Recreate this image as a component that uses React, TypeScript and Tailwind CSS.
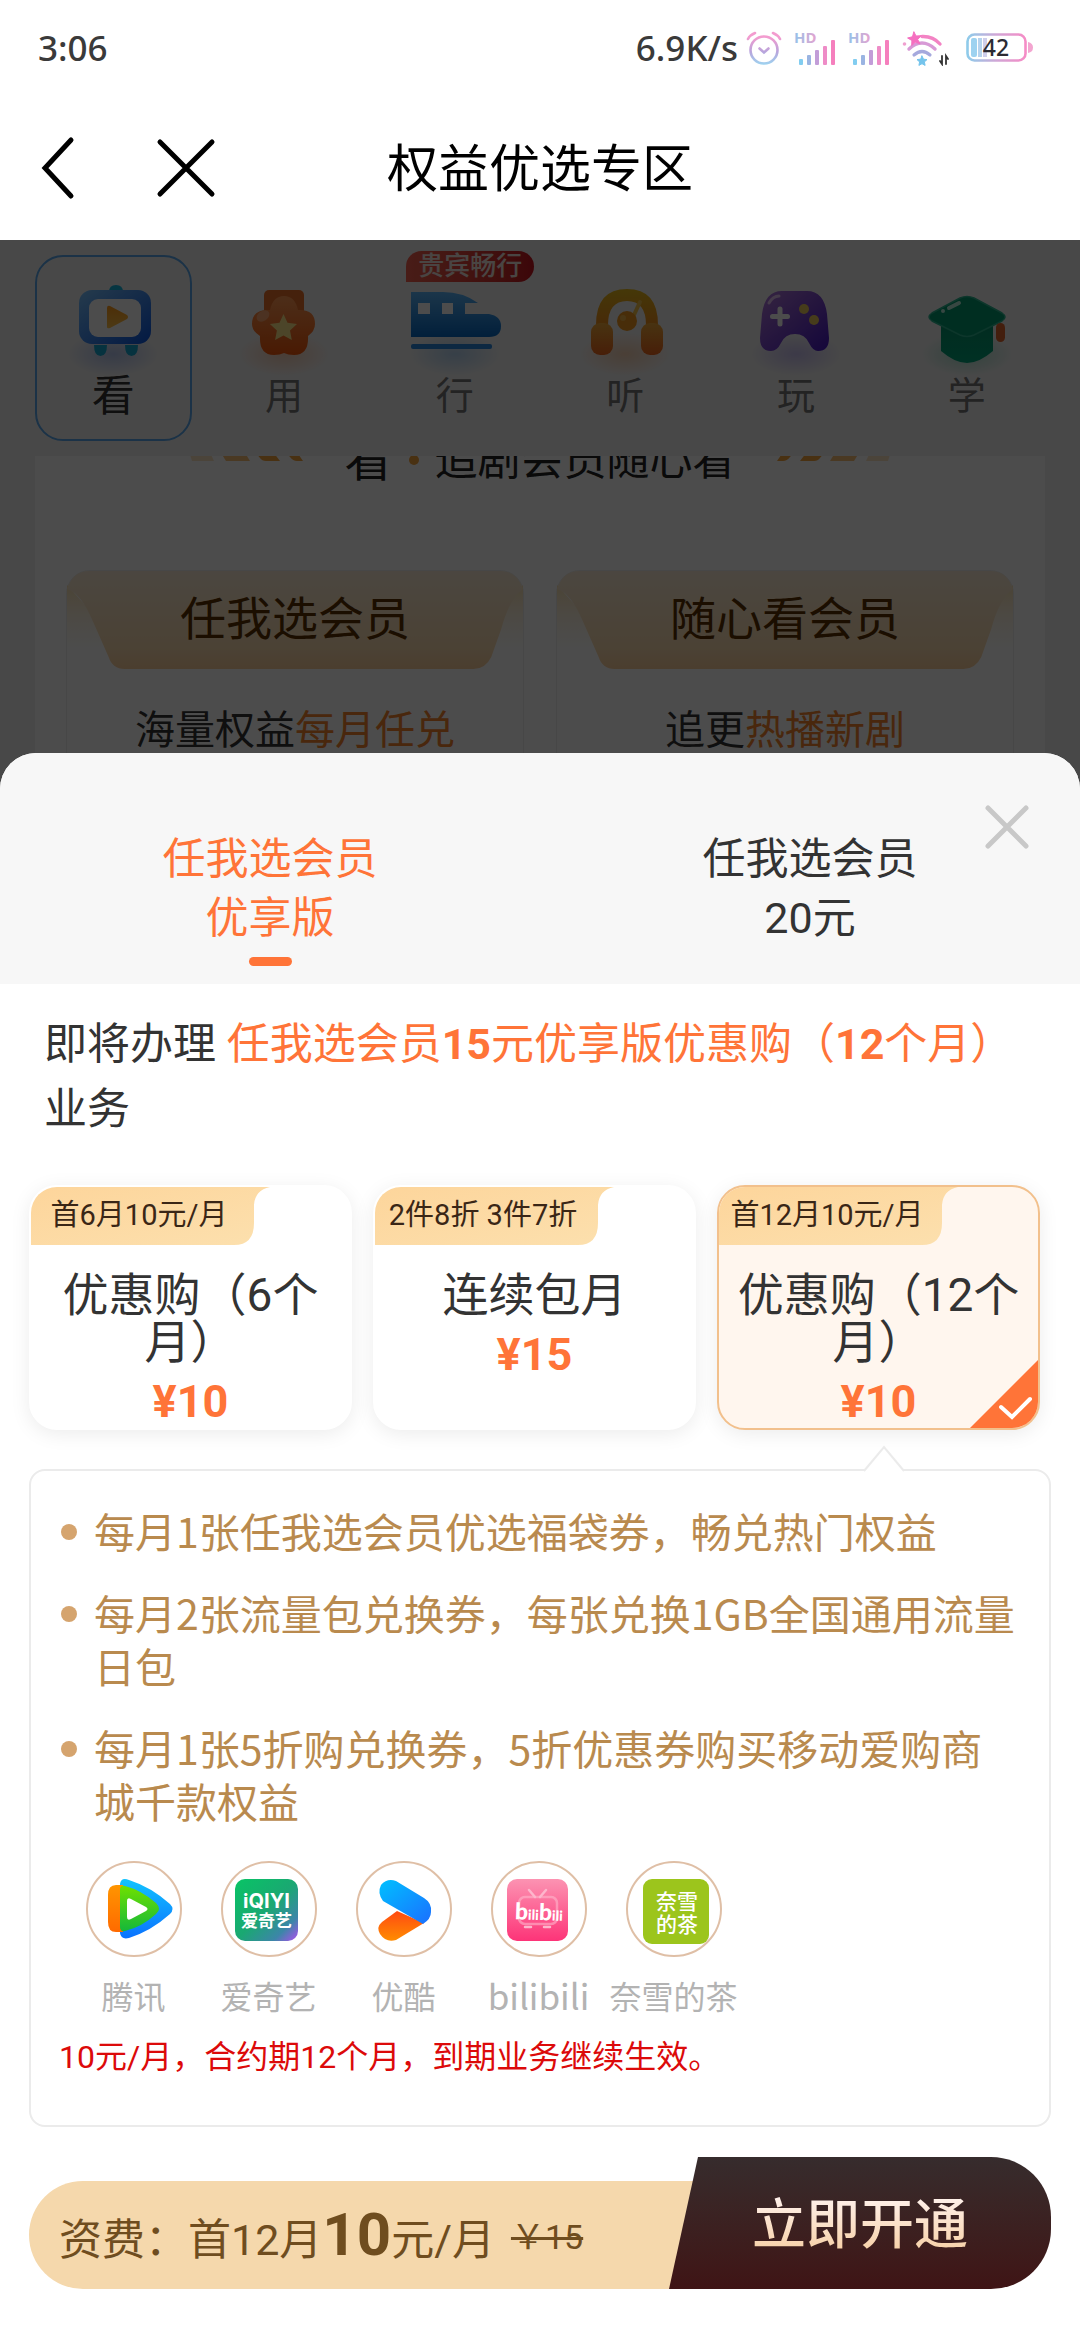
import { useState, type ReactNode } from 'react';
import clsx from 'clsx';

function AlarmIcon() {
  return (
    <svg viewBox="0 0 36 36" className="size-9" fill="none" strokeLinecap="round" strokeWidth="2.6">
      <defs>
        <linearGradient id="alarm" x1="0" y1="0" x2="0" y2="36" gradientUnits="userSpaceOnUse">
          <stop offset="0.2" stopColor="#f39ccf" />
          <stop offset="0.6" stopColor="#b9a4dc" />
          <stop offset="1" stopColor="#9bd8f2" />
        </linearGradient>
      </defs>
      <g stroke="url(#alarm)">
        <circle cx="18" cy="20" r="13.5" />
        <path d="M13.5 18.5 18 22.5 22.5 18.5M2 9Q4 5 9 3M34 9Q32 5 27 3" />
      </g>
    </svg>
  );
}

function SignalIcon() {
  return (
    <svg viewBox="0 0 42 36" className="h-9 w-[42px] overflow-visible">
      <defs>
        <linearGradient id="hd" x1="0" y1="0" x2="1" y2="0">
          <stop offset="0" stopColor="#92c3ea" />
          <stop offset="1" stopColor="#e5a3cf" />
        </linearGradient>
      </defs>
      <text x="0" y="13" fontSize="15" fontWeight="700" fontFamily="Noto Sans" fill="url(#hd)">
        HD
      </text>
      <rect x="5" y="29" width="4" height="6" rx="1" fill="#82cdf0" />
      <rect x="13" y="25" width="4" height="10" rx="1" fill="#9ab4e2" />
      <rect x="21" y="20" width="4" height="15" rx="1" fill="#c29dd8" />
      <rect x="29" y="16" width="4" height="19" rx="1" fill="#ee8cc7" />
      <rect x="37" y="10" width="4" height="25" rx="1" fill="#f57fbd" />
    </svg>
  );
}

function WifiIcon() {
  return (
    <svg viewBox="0 0 48 36" className="h-9 w-12" fill="none" strokeLinecap="round">
      <path d="M20 6.5Q31 6 38 14" stroke="#f383c4" strokeWidth="3.4" />
      <path d="M7 19Q20 7 33 19" stroke="#d79ad6" strokeWidth="3.4" />
      <path d="M12 25Q20 18 28 25" stroke="#a5a9dd" strokeWidth="3.2" />
      <path
        d="m20 26 1.5 3.2 3.5.4-2.6 2.3.7 3.5-3.1-1.7-3.1 1.7.7-3.5L15 29.6l3.5-.4z"
        fill="#74c4ec"
        stroke="#74c4ec"
      />
      <path d="m12 2 2 4 5-.3-3.3 3.8 2.3 4.3-4.7-1.5-3.6 3.2.2-5L5.6 8l4.6-1.2z" fill="#f56fc0" stroke="#f56fc0" />
      <circle cx="2.5" cy="14" r="1.8" fill="#f0a0d0" />
      <path d="M40 26v8l-2-3M44 34v-8l2 3" stroke="#333" strokeWidth="1.8" />
    </svg>
  );
}

function BatteryIcon() {
  return (
    <svg viewBox="0 0 68 30" className="h-[30px] w-[68px] overflow-visible">
      <defs>
        <linearGradient id="battery" x1="0" y1="0" x2="1" y2="0">
          <stop offset="0" stopColor="#8fcbea" />
          <stop offset="0.5" stopColor="#d0a6d6" />
          <stop offset="1" stopColor="#f58cc6" />
        </linearGradient>
      </defs>
      <rect x="1.5" y="1.5" width="58" height="26" rx="7" fill="none" stroke="url(#battery)" strokeWidth="2.6" />
      <path d="M62 9q5 1 5 5.500T62 20z" fill="#f3a5d0" />
      <rect x="5" y="5" width="6" height="19" rx="2" fill="#9dd2f0" />
      <rect x="12" y="5" width="4" height="19" fill="#b5d3ee" />
      <rect x="17" y="5" width="4" height="19" fill="#cfcfec" />
      <text x="30" y="22.5" textAnchor="middle" fontSize="23" fontWeight="500" fontFamily="Noto Sans" fill="#2b2b33">
        42
      </text>
    </svg>
  );
}

function Glow({ id, color }: { id: string; color: string }) {
  return (
    <>
      <defs>
        <radialGradient id={id}>
          <stop offset="0" stopColor={color} stopOpacity="0.4" />
          <stop offset="1" stopColor={color} stopOpacity="0" />
        </radialGradient>
      </defs>
      <ellipse cx="48" cy="74" rx="46" ry="22" fill={`url(#${id})`} />
    </>
  );
}

function Gradient({ id, from, to, diagonal }: { id: string; from: string; to: string; diagonal?: boolean }) {
  return (
    <defs>
      <linearGradient id={id} x1="0" y1="0" x2={diagonal ? '1' : '0'} y2="1">
        <stop offset="0" stopColor={from} />
        <stop offset="1" stopColor={to} />
      </linearGradient>
    </defs>
  );
}

function TvIcon() {
  return (
    <svg viewBox="0 0 96 96" className="size-24">
      <Glow id="tv-glow" color="#5b83e8" />
      <Gradient id="tv" from="#7cc4ff" to="#0a55e0" diagonal />
      <Gradient id="tv-play" from="#ff9a1a" to="#ffc24a" />
      <path d="M44 12q0-7 7-7t7 7z" fill="#17b5dd" />
      <path d="M29 65h13q0 11-6.5 11T29 65M60 65h13q0 11-6.5 11T60 65" fill="#17a9d2" />
      <rect x="14" y="10" width="72" height="54" rx="13" fill="url(#tv)" />
      <rect x="24" y="19" width="52" height="38" rx="9" fill="#fff" />
      <path d="M42 28q0-3 3-2l17 9q2 2 0 4L45 48q-3 1-3-1z" fill="url(#tv-play)" />
    </svg>
  );
}

function FlowerIcon() {
  return (
    <svg viewBox="0 0 96 96" className="size-24">
      <Glow id="flower-glow" color="#ff9a5c" />
      <Gradient id="flower" from="#ff9a55" to="#f2560a" />
      <rect x="28" y="10" width="40" height="34" rx="5" fill="#e8702a" />
      <path
        d="M34 30q3-14 14-14t14 14q17-1 17 14 0 7-7 12 1 19-14 19-6 0-10-2-4 2-10 2-15 0-14-19-8-5-8-12 0-15 18-14"
        fill="url(#flower)"
      />
      <ellipse cx="27" cy="36" rx="7" ry="5" fill="#ffb88a" opacity="0.7" transform="rotate(-35 27 36)" />
      <path d="m47.5 34 4 8.800 9.500 1.200-7 6.500 1.800 9.500-8.300-4.600-8.400 4.600 1.800-9.500-7-6.500 9.600-1.200z" fill="#ffe88a" />
    </svg>
  );
}

function TrainIcon() {
  return (
    <svg viewBox="0 0 96 96" className="size-24">
      <Glow id="train-glow" color="#5fa8f0" />
      <Gradient id="train" from="#5cb4f7" to="#0668c4" />
      <path d="M4 12h32q20 0 35 11H58v11h24q12 2 12 12 0 11-12 11H4z" fill="url(#train)" />
      <path d="M11 23h12v11H11zM35 23h11v11H35z" fill="#fff" />
      <rect x="4" y="64" width="81" height="5" rx="2" fill="#2a86dc" />
    </svg>
  );
}

function HeadphoneIcon() {
  return (
    <svg viewBox="0 0 96 96" className="size-24">
      <Glow id="phone-glow" color="#ffa057" />
      <Gradient id="phone-band" from="#e6bb1d" to="#f08c1c" />
      <Gradient id="phone-ear" from="#f0ab3a" to="#ef661d" />
      <path d="M19 45q0-36 31-36t31 36H69q0-24-19-24T31 45z" fill="url(#phone-band)" />
      <rect x="14" y="43" width="22" height="32" rx="9" fill="url(#phone-ear)" />
      <rect x="64" y="43" width="22" height="32" rx="9" fill="url(#phone-ear)" />
      <path d="M56 37 63 22" stroke="#f3c24b" strokeWidth="4" strokeLinecap="round" />
      <circle cx="50" cy="41" r="10" fill="#f2961e" />
      <circle cx="46" cy="38" r="3" fill="#f5b548" />
    </svg>
  );
}

function GamepadIcon() {
  return (
    <svg viewBox="0 0 96 96" className="size-24">
      <Glow id="pad-glow" color="#8d78f0" />
      <Gradient id="pad" from="#b37ad8" to="#4416c4" diagonal />
      <path
        d="M14 34Q17 11 34 11h25q17 0 20 23l2 24q0 13-11 13-5 0-9-8-4-9-14-9t-14 9q-4 8-10 8-11 0-11-13z"
        fill="url(#pad)"
      />
      <path d="M32 29v15M24.5 36.5h15" stroke="#fff" strokeWidth="5" strokeLinecap="round" />
      <circle cx="56" cy="29" r="5" fill="#ecc95a" />
      <circle cx="66" cy="40" r="5" fill="#ecc95a" />
      <path d="M21 23q4-7 10-7" stroke="#e5c3f3" strokeWidth="3" strokeLinecap="round" fill="none" />
    </svg>
  );
}

function CapIcon() {
  return (
    <svg viewBox="0 0 96 96" className="size-24">
      <Glow id="cap-glow" color="#3fc49a" />
      <Gradient id="cap" from="#05936c" to="#02a379" />
      <path d="M22 46h52v25q-14 12-26 12T22 71z" fill="url(#cap)" />
      <path
        d="M41 18q7-3 14 0l28 15q6 4 0 8L55 55q-7 3-14 0L13 41q-6-4 0-8z"
        fill="#029a70"
        stroke="#2cb48f"
        strokeWidth="1.5"
      />
      <path d="m30 28 10-5" stroke="#b8eedc" strokeWidth="4" strokeLinecap="round" />
      <circle cx="24" cy="31" r="2" fill="#b8eedc" />
      <rect x="77" y="43" width="9" height="19" rx="4.5" fill="#e0662d" />
    </svg>
  );
}

function TencentLogo() {
  return (
    <>
      <Gradient id="tx-blue" from="#12c3ff" to="#0a72ff" />
      <Gradient id="tx-orange" from="#ff9500" to="#ff6a00" />
      <Gradient id="tx-green" from="#6fe000" to="#14b83a" />
      <path d="M34 23q1-7 9-4 22 7 41 24 5 5 0 10-19 17-41 24-8 2-9-5z" fill="url(#tx-blue)" />
      <path d="M22 34q0-10 8-10h7v47h-7q-8 0-8-10z" fill="url(#tx-orange)" />
      <path d="M34 29q0-5 5-4 16 4 31 17 6 6 0 11-14 13-31 17-5 1-5-4z" fill="url(#tx-green)" />
      <path d="M41 40q0-4 4-2l15 8q3 2 0 4l-15 8q-4 2-4-2z" fill="#fff" />
    </>
  );
}

function IqiyiLogo() {
  return (
    <>
      <defs>
        <linearGradient id="iqiyi" x1="0" y1="0" x2="1" y2="1">
          <stop offset="0" stopColor="#08c465" />
          <stop offset="0.5" stopColor="#1aa872" />
          <stop offset="0.8" stopColor="#3c86a8" />
          <stop offset="1" stopColor="#b04ef0" />
        </linearGradient>
      </defs>
      <rect x="14" y="18" width="63" height="62" rx="10" fill="url(#iqiyi)" />
      <g fill="#fff" textAnchor="middle" fontWeight="700">
        <text x="45.5" y="47" fontSize="20" fontFamily="Inter">
          iQIYI
        </text>
        <text x="45.5" y="66" fontSize="17" fontFamily="Noto Sans CJK SC">
          爱奇艺
        </text>
      </g>
    </>
  );
}

function YoukuLogo() {
  return (
    <>
      <Gradient id="yk-blue" from="#00c0ff" to="#1b6fff" diagonal />
      <Gradient id="yk-orange" from="#ff4a12" to="#ff8c00" />
      <path d="M41 50 26 61q-6 5-2 12 6 9 16 6l28-17z" fill="url(#yk-orange)" />
      <path d="M25 24q6-7 15-4l28 17q8 5 7 14 0 7-8 12L27 40q-6-8-2-16" fill="url(#yk-blue)" />
    </>
  );
}

function BilibiliLogo() {
  return (
    <>
      <Gradient id="bili" from="#fc93b2" to="#fd3478" />
      <rect x="16" y="18" width="61" height="62" rx="10" fill="url(#bili)" />
      <g fill="none" stroke="#fdb6cc" strokeWidth="2.5" strokeLinecap="round">
        <path d="m38 29 6 7M55 29l-6 7" />
        <rect x="28" y="36" width="38" height="27" rx="6" opacity="0.6" />
        <path d="M34 66h6M53 66h6" />
      </g>
      <text x="48" y="59" fontSize="14" fontWeight="900" fontFamily="Lato" textAnchor="middle" fill="#fff" transform="rotate(2 46 50)">
        <tspan fontSize="23">b</tspan>ili<tspan fontSize="23">b</tspan>ili
      </text>
    </>
  );
}

function NayukiLogo() {
  return (
    <>
      <rect x="17" y="18" width="66" height="65" rx="9" fill="#9cc51c" />
      <g fill="#fff" textAnchor="middle" fontSize="21" fontWeight="500" fontFamily="Noto Sans CJK SC">
        <text x="51" y="48">
          奈雪
        </text>
        <text x="51" y="71">
          的茶
        </text>
      </g>
    </>
  );
}

const categories: { name: string; icon: ReactNode; badge?: string }[] = [
  { name: '看', icon: <TvIcon /> },
  { name: '用', icon: <FlowerIcon /> },
  { name: '行', icon: <TrainIcon />, badge: '贵宾畅行' },
  { name: '听', icon: <HeadphoneIcon /> },
  { name: '玩', icon: <GamepadIcon /> },
  { name: '学', icon: <CapIcon /> },
];

const memberships = [
  { title: '任我选会员', text: '海量权益', highlight: '每月任兑' },
  { title: '随心看会员', text: '追更', highlight: '热播新剧' },
];

const versions = [
  ['任我选会员', '优享版'],
  ['任我选会员', '20元'],
];

const plans = [
  { tag: '首6月10元/月', name: '优惠购（6个月）', price: 10 },
  { tag: '2件8折 3件7折', name: '连续包月', price: 15 },
  { tag: '首12月10元/月', name: '优惠购（12个月）', price: 10 },
];

const benefits = [
  '每月1张任我选会员优选福袋券，畅兑热门权益',
  '每月2张流量包兑换券，每张兑换1GB全国通用流量日包',
  '每月1张5折购兑换券，5折优惠券购买移动爱购商城千款权益',
];

const brands: { name: string; logo: ReactNode }[] = [
  { name: '腾讯', logo: <TencentLogo /> },
  { name: '爱奇艺', logo: <IqiyiLogo /> },
  { name: '优酷', logo: <YoukuLogo /> },
  { name: 'bilibili', logo: <BilibiliLogo /> },
  { name: '奈雪的茶', logo: <NayukiLogo /> },
];

function StatusBar() {
  return (
    <div className="flex h-24 items-center justify-between pr-[46px] pl-[38px] font-['Noto_Sans',sans-serif] text-[35px] font-medium text-[#3a3a3a]">
      <span>3:06</span>
      <div className="flex items-center">
        <span className="mr-2">6.9K/s</span>
        <AlarmIcon />
        <span className="ml-3 flex gap-3">
          <SignalIcon />
          <SignalIcon />
        </span>
        <span className="ml-3">
          <WifiIcon />
        </span>
        <span className="ml-4">
          <BatteryIcon />
        </span>
      </div>
    </div>
  );
}

function NavBar() {
  return (
    <header className="grid h-36 grid-cols-[1fr_auto_1fr] items-center">
      <div className="flex items-center gap-20 pl-10">
        <button type="button" aria-label="返回">
          <svg viewBox="0 0 36 64" className="h-16 w-9" fill="none" stroke="#000" strokeWidth="5" strokeLinecap="round">
            <path d="M31 4 5 32l26 28" />
          </svg>
        </button>
        <button type="button" aria-label="关闭">
          <svg viewBox="0 0 60 60" className="size-[60px]" fill="none" stroke="#000" strokeWidth="5" strokeLinecap="round">
            <path d="m4 4 52 52M56 4 4 56" />
          </svg>
        </button>
      </div>
      <h1 className="pt-1 text-[51px] text-black">权益优选专区</h1>
    </header>
  );
}

function Dashes({ flip }: { flip?: boolean }) {
  return (
    <svg viewBox="0 0 140 24" className={clsx('h-6 w-[140px]', flip && '-scale-x-100')} fill="#f5a33c">
      <path d="M24 0h20l6 13H28z" opacity="0.3" />
      <path d="M54 0h24l8 13H62z" opacity="0.7" />
      <path d="M88 0h18l10 13h-14q-4 0-6-3zM118 0h12l9 13h-6q-4 0-7-4z" />
    </svg>
  );
}

function CategoryPage() {
  return (
    <div>
      <nav className="grid grid-cols-6 px-7 py-[15px]">
        {categories.map((item, i) => (
          <button
            type="button"
            key={item.name}
            className={clsx(
              'relative mx-[7px] flex h-[186px] flex-col items-center rounded-[28px] border-2 pt-[23px]',
              i === 0 ? 'border-[#5aa9ee]' : 'border-transparent',
            )}
          >
            {item.icon}
            <span className={clsx('leading-[40px]', i === 0 ? 'text-[43px] text-[#333]' : 'text-[38px] text-[#777]')}>
              {item.name}
            </span>
            {item.badge && (
              <span className="absolute -top-1.5 left-7 rounded-2xl rounded-bl-none bg-linear-to-r from-[#f2604f] to-[#c81420] px-3 text-[26px] leading-[31px] font-medium whitespace-nowrap text-[#f5e6e0]">
                {item.badge}
              </span>
            )}
          </button>
        ))}
      </nav>

      <section className="mx-[35px] h-[420px] overflow-hidden bg-white px-[31px]">
        <h2 className="-mt-5 flex items-center justify-center text-[43px] leading-[48px] text-[#222]">
          <Dashes />
          <span className="ml-10 text-[48px]">看</span>
          <span className="mx-4 size-[10px] rounded-full bg-[#f5a33c]" />
          <span className="mr-10">追剧会员随心看</span>
          <Dashes flip />
        </h2>
        <div className="mt-[86px] grid grid-cols-2 gap-8">
          {memberships.map((item) => (
            <article key={item.title} className="h-[360px] rounded-3xl border border-[#eee] text-center">
              <div className="relative h-[98px]">
                <svg viewBox="0 0 460 98" preserveAspectRatio="none" className="absolute inset-0 size-full">
                  <defs>
                    <linearGradient id="fold" x1="0" y1="0" x2="0" y2="1">
                      <stop offset="0" stopColor="#fbe3b4" />
                      <stop offset="1" stopColor="#fff3dc" stopOpacity="0" />
                    </linearGradient>
                    <linearGradient id="banner" x1="0" y1="0" x2="0" y2="1">
                      <stop offset="0" stopColor="#faecd6" />
                      <stop offset="0.8" stopColor="#fbdcb0" />
                      <stop offset="1" stopColor="#fccf9c" />
                    </linearGradient>
                  </defs>
                  <path d="M0 14 60 80H0zM460 14 400 80h60z" fill="url(#fold)" />
                  <path d="M0 18Q6 0 22 0h416q16 0 22 18-14 10-22 40l-10 28q-6 12-18 12H58q-12 0-16-12L26 50Q14 22 0 18" fill="url(#banner)" />
                </svg>
                <h3 className="relative text-[46px] leading-[96px] text-[#5c3000]">{item.title}</h3>
              </div>
              <p className="mt-[34px] text-[40px] leading-[56px] text-[#333]">
                {item.text}
                <span className="text-[#f5842e]">{item.highlight}</span>
              </p>
            </article>
          ))}
        </div>
      </section>
    </div>
  );
}

export default function App() {
  const [version, setVersion] = useState(0);
  const [plan, setPlan] = useState(2);

  return (
    <div className="flex min-h-screen flex-col bg-white font-['Roboto','Noto_Sans_CJK_SC',sans-serif] text-[#333]">
      <StatusBar />
      <NavBar />

      <main className="relative flex-1 overflow-hidden bg-[#f2f2f2]">
        <CategoryPage />
        <div className="absolute inset-0 bg-black/70" />

        <div role="dialog" aria-label="套餐办理" className="absolute inset-x-0 bottom-0 overflow-hidden rounded-t-[36px] bg-white">
          <div className="relative bg-[#f7f7f7]">
            <div role="tablist" className="grid grid-cols-2 pt-[77px] pb-[18px]">
              {versions.map((lines, i) => (
                <button
                  type="button"
                  role="tab"
                  key={lines[1]}
                  aria-selected={version === i}
                  onClick={() => setVersion(i)}
                  className={clsx(
                    'flex flex-col items-center text-[43px] leading-[59px]',
                    version === i ? 'text-[#ff7438]' : 'text-[#333]',
                  )}
                >
                  <span>{lines[0]}</span>
                  <span>{lines[1]}</span>
                  <span className={clsx('mt-[9px] h-[9px] w-[43px] rounded-full', version === i && 'bg-[#ff7438]')} />
                </button>
              ))}
            </div>
            <button type="button" aria-label="关闭弹窗" className="absolute top-[52px] right-[51px]">
              <svg viewBox="0 0 44 44" className="size-11" fill="none" stroke="#c8c8c8" strokeWidth="5" strokeLinecap="round">
                <path d="m3 3 38 38M41 3 3 41" />
              </svg>
            </button>
          </div>

          <p className="px-11 pt-7 text-[43px] leading-[65px]">
            即将办理{' '}
            <span className="text-[#ff7438]">
              任我选会员<b>15</b>元优享版优惠购（<b>12</b>个月）
            </span>
            业务
          </p>

          <div className="mt-[43px] mr-10 ml-[29px] grid grid-cols-3 gap-[21px]">
            {plans.map((item, i) => (
              <label
                key={item.name}
                className={clsx(
                  'relative h-[245px] overflow-hidden rounded-[28px] border-2 text-center shadow-[0_4px_20px_rgba(0,0,0,0.08)]',
                  plan === i ? 'border-[#f2c08c] bg-[#fff6ee]' : 'border-white bg-white',
                )}
              >
                <input type="radio" name="plan" className="sr-only" checked={plan === i} onChange={() => setPlan(i)} />
                <span className="relative block h-[58px] w-60">
                  <svg viewBox="0 0 240 58" className="absolute inset-0 size-full">
                    <Gradient id={`tag-${i}`} from="#fdd59b" to="#fce0ae" diagonal />
                    <path d="M0 0h239q-15 3-16 18v18q0 22-20 22H0z" fill={`url(#tag-${i})`} />
                  </svg>
                  <span className="relative block w-[216px] text-[29px] leading-[56px] whitespace-nowrap text-[#3a2616]">
                    {item.tag}
                  </span>
                </span>
                <span className="mt-[27px] block px-3 text-[46px] leading-[47px]">{item.name}</span>
                <b className="mt-1.5 block text-[45px] leading-[60px] text-[#ff7438]">¥{item.price}</b>
                {plan === i && (
                  <svg viewBox="0 0 68 68" className="absolute right-0 bottom-0 size-[68px]" fill="none">
                    <path d="M68 0v68H0z" fill="#ff7438" />
                    <path d="m31 47 11 10 18-18" stroke="#fff" strokeWidth="4" strokeLinecap="round" />
                  </svg>
                )}
              </label>
            ))}
          </div>

          <section className="relative mx-[29px] mt-[39px] rounded-2xl border-2 border-[#ebebeb] px-7 pt-[33px] pb-11">
            <svg viewBox="0 0 42 28" className="absolute -top-[26px] right-[144px] h-7 w-[42px]">
              <path d="M1 26 21 2l20 24" fill="#fff" stroke="#ebebeb" strokeWidth="2" />
              <path d="M3 25h36v3H3z" fill="#fff" />
            </svg>
            <ul className="flex flex-col gap-[29px] pl-0.5 font-['Noto_Sans_CJK_SC',sans-serif] text-[41px] leading-[53px] text-[#b98a4e]">
              {benefits.map((item) => (
                <li key={item} className="flex gap-[17px]">
                  <span className="mt-5 size-4 shrink-0 rounded-full bg-[#d5a46e]" />
                  <span>{item}</span>
                </li>
              ))}
            </ul>
            <ul className="mt-[34px] ml-[7px] flex font-['Noto_Sans_CJK_SC',sans-serif] text-[#b3b3b3]">
              {brands.map((item) => (
                <li key={item.name} className="flex w-[135px] flex-col items-center whitespace-nowrap">
                  <svg viewBox="0 0 96 96" className="size-24">
                    <circle cx="48" cy="48" r="47" fill="#fff" stroke="#dfbfa6" strokeWidth="2" />
                    {item.logo}
                  </svg>
                  <span className={clsx('mt-3.5 leading-[48px]', item.name === 'bilibili' ? 'text-[35px]' : 'text-[32px]')}>
                    {item.name}
                  </span>
                </li>
              ))}
            </ul>
            <p className="mt-3.5 text-[32px] leading-[48px] text-[#dc0a0a]">10元/月，合约期12个月，到期业务继续生效。</p>
          </section>

          <footer className="mx-[29px] mt-[30px] mb-[51px] flex items-end">
            <div className="-mr-8 flex h-[108px] flex-1 items-center rounded-l-[54px] bg-[#f5d8ac] pt-1 pl-[30px] text-[#6f4d1f]">
              <p className="text-[43px] leading-[60px] whitespace-nowrap">
                资费：首12月<b className="text-[60px]">10</b>元/月
              </p>
              <del className="ml-4 text-[34px]">￥15</del>
            </div>
            <button
              type="button"
              className="relative h-[132px] w-[382px] rounded-r-[60px] bg-linear-to-b from-[#362c2d] to-[#3f1415] pt-1 [clip-path:polygon(29px_0,100%_0,100%_100%,0_100%)]"
            >
              <span className="bg-linear-to-b from-[#fff2ee] to-[#f6cda0] bg-clip-text text-[54px] font-medium text-transparent">
                立即开通
              </span>
            </button>
          </footer>
        </div>
      </main>
    </div>
  );
}
